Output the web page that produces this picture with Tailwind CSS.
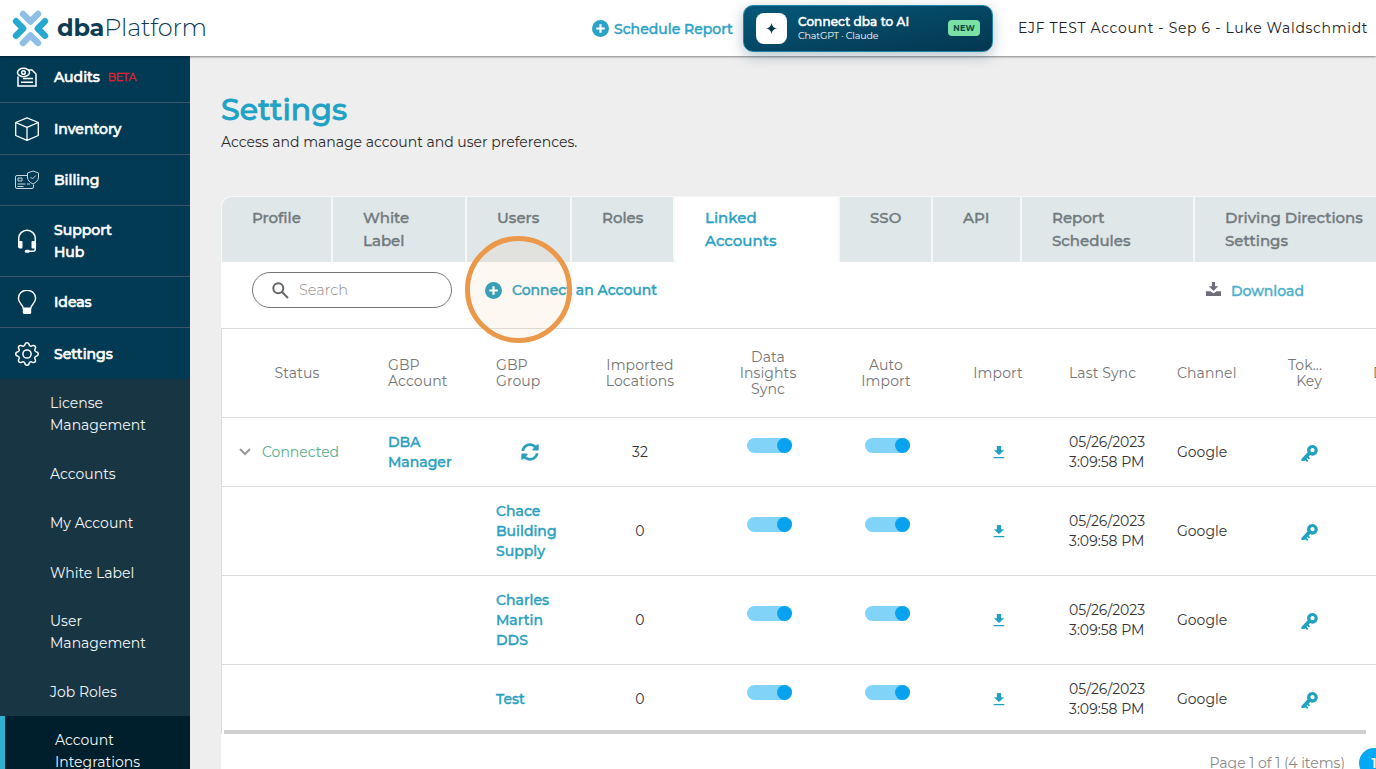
<!DOCTYPE html>
<html lang="en-us">
    <head><meta name="viewport" content="width=device-width, initial-scale=1.0">
<meta charset="UTF-8">
<script src="https://cdn.jsdelivr.net/npm/@tailwindcss/browser@4"></script>
    <title>dbaPlatform | Settings</title>
    </head>
    <body class="flex flex-col h-screen overflow-hidden bg-[#eeeeee] font-['Montserrat','Inter',sans-serif] text-sm text-[#333]">

        <!-- icons -->
        <svg class="hidden">
            <symbol id="plus" viewBox="0 0 17 17">
                <circle cx="8.5" cy="8.5" r="8.5" fill="currentColor"/>
                <path d="M8.5 4.2v8.6M4.2 8.5h8.6" stroke="#fff" stroke-width="2.2"/>
            </symbol>
            <symbol id="import" viewBox="0 0 12 14">
                <path d="M3.9 1h4.2v4.2h3L6 10 .9 5.2h3z" fill="currentColor"/>
                <path d="M.7 12.6h10.6" stroke="currentColor" stroke-width="1.3"/>
            </symbol>
            <symbol id="key" viewBox="0 0 17 17">
                <path fill-rule="evenodd" fill="currentColor" d="M11.4 0a5.3 5.3 0 1 1-2.2 10.1L7.6 11.7l1.5 1.5-1.3 1.3-1.5-1.4-.7.7 1.8 1.8-1.3 1.3-1.9-1.7-1 .7L.4 16V13.900L6.500 7.400A5.300 5.300 0 0 1 11.400 0ZM11.500 3.100a2.100 2.100 0 1 0 .01 0Z"/>
            </symbol>
        </svg>

        <header class="relative z-10 flex flex-none items-center h-14 bg-white shadow-[0_1px_2px_rgba(0,0,0,0.45)]">
            <a class="flex items-center w-[592px] pl-3" href="#">
                <svg class="w-[37px] h-[37px] mr-2" viewBox="0 0 37 37" fill="none" stroke-width="6.4" stroke-linecap="round" stroke-linejoin="round">
                    <path d="M11 4l7.500 7.500L26 4M11 33l7.500-7.500L26 33" stroke="#8fbfe6"/>
                    <path d="M4 11.200l7.200 7.300L4 25.800M33 11.200l-7.200 7.300L33 25.800" stroke="#27a9cf"/>
                </svg>
                <span class="text-[24px] leading-none font-bold tracking-[-0.2px] text-[#0c3d54]">dba<span class="font-light">Platform</span></span>
            </a>
            <a class="flex items-center w-[151px] font-medium text-[#2aa3c6]" href="#">
                <svg class="flex-none w-[17px] h-[17px] mr-[5px]"><use href="#plus"/></svg>
                <span class="pt-px whitespace-nowrap [-webkit-text-stroke:0.4px]">Schedule Report</span>
            </a>
            <a class="flex items-center w-[250px] h-[47px] pl-3 pr-3 rounded-[10px] border border-[#1f86a8] bg-linear-to-br from-[#05597a] to-[#04364f] text-white shadow-[0_4px_14px_rgba(2,58,84,0.3)]" href="#">
                <span class="flex items-center justify-center w-[31px] h-[31px] rounded-lg bg-white">
                    <svg class="w-[11px] h-[11px]" viewBox="0 0 10 10"><path d="M5 0Q5.600 4.400 10 5 5.600 5.600 5 10 4.400 5.600 0 5 4.400 4.400 5 0Z" fill="#04364f"/></svg>
                </span>
                <span class="flex flex-col ml-[11px]">
                    <span class="text-xs leading-[15px] font-medium tracking-[0.1px] whitespace-nowrap [-webkit-text-stroke:0.5px]">Connect dba to AI</span>
                    <span class="text-[9.500px] leading-[13px] tracking-[-0.15px]">ChatGPT · Claude</span>
                </span>
                <span class="ml-auto px-[5px] py-px rounded bg-[#7be0a4] text-[8px] leading-[14px] font-bold tracking-wide text-[#0b4a3c]">NEW</span>
            </a>
            <span class="ml-[25px] tracking-[0.67px] text-[#222] whitespace-nowrap">EJF TEST Account - Sep 6 - Luke Waldschmidt</span>
        </header>

        <div class="flex flex-1 min-h-0">
            <nav class="flex-none w-[190px] overflow-hidden bg-[#023a54] text-white">
                <div class="font-medium leading-[22px] [-webkit-text-stroke:0.6px]">
                    <a class="flex items-center h-[47px] pl-[15px] pb-1 border-b border-[#3a5468]" href="#">
                        <svg class="w-6 h-6 mr-[15px]" viewBox="0 0 24 24" fill="none" stroke="#fff" stroke-width="1.500">
                            <path d="M3 11.500V21h18V9l-4-4h-4"/>
                            <ellipse cx="8.500" cy="7.500" rx="6" ry="4.200"/><circle cx="8.500" cy="7.500" r="1.800"/>
                            <path d="M8 13.500h10M6 17.300h12"/>
                        </svg>
                        Audits <span class="ml-2 text-[11px] font-normal tracking-[-0.3px] text-[#e0202c] [-webkit-text-stroke:0.4px]">BETA</span>
                    </a>
                    <a class="flex items-center h-[52px] pl-[15px] border-b border-[#3a5468]" href="#">
                        <svg class="w-6 h-6 mr-[15px]" viewBox="0 0 24 24" fill="none" stroke="#fff" stroke-width="1.300" stroke-linejoin="round"><path d="M12 .800l11.300 4.700v13L12 23.300.700 18.500v-13zM.700 5.500L12 10.300l11.300-4.800M12 10.300v13"/></svg>
                        Inventory
                    </a>
                    <a class="flex items-center h-[51px] pl-[15px] border-b border-[#3a5468]" href="#">
                        <svg class="w-6 h-6 mr-[15px]" viewBox="0 0 24 24" fill="none" stroke="#c9d8e0" stroke-width="1">
                            <path d="M12 7.500H2A1.500 1.500 0 0 0 .500 9v10A1.500 1.500 0 0 0 2 20.500h15a1.500 1.500 0 0 0 1.500-1.500v-2.500M18 3l5.500 2v4c0 3.500-2.500 5.500-5.500 7-3-1.500-5.500-3.500-5.500-7V5z"/>
                            <path d="M15.500 9l2 2 3.300-3.500M3 10h4v3H3zM2.500 16h8m1.500 0h3M2.500 18.500h6"/>
                        </svg>
                        Billing
                    </a>
                    <a class="flex items-center h-[71px] pl-[15px] border-b border-[#3a5468]" href="#">
                        <svg class="w-6 h-6 mr-[15px]" viewBox="0 0 24 24" fill="none" stroke="#fff" stroke-width="1.500">
                            <path d="M3.700 13V9.500a8.300 8.300 0 0 1 16.600 0V20q0 2.300-2.500 2.300H14"/>
                            <path d="M3 12h3.500a1 1 0 0 1 1 1v5.500a1 1 0 0 1-1 1H5a2 2 0 0 1-2-2zM21 12h-3.500a1 1 0 0 0-1 1v5.500a1 1 0 0 0 1 1H21z" fill="#fff" stroke="none"/>
                            <rect x="9.800" y="20.800" width="5" height="3" rx="1.500" fill="#fff" stroke="none"/>
                        </svg>
                        <span class="w-20">Support Hub</span>
                    </a>
                    <a class="flex items-center h-[51px] pl-[15px] border-b border-[#3a5468]" href="#">
                        <svg class="w-6 h-6 mr-[15px]" viewBox="0 0 24 24" fill="none" stroke="#fff" stroke-width="1.400">
                            <path d="M8.300 18.300c0-3.300-4.900-4.800-4.900-10a8.600 8.100 0 0 1 17.200 0c0 5.200-4.900 6.700-4.900 10z"/>
                            <path d="M7.800 18h8.400v4.500a1.500 1.500 0 0 1-1.500 1.500H9.300a1.500 1.500 0 0 1-1.500-1.500z" fill="#fff" stroke="none"/>
                        </svg>
                        Ideas
                    </a>
                    <a class="flex items-center h-[51px] pl-[15px]" href="#">
                        <svg class="w-6 h-6 mr-[15px]" viewBox="0 0 16 16" fill="#fff">
                            <path d="M8 4.754a3.246 3.246 0 1 0 0 6.492 3.246 3.246 0 0 0 0-6.492zM5.754 8a2.246 2.246 0 1 1 4.492 0 2.246 2.246 0 0 1-4.492 0z"/>
                            <path d="M9.796 1.343c-.527-1.790-3.065-1.790-3.592 0l-.094.319a.873.873 0 0 1-1.255.520l-.292-.160c-1.640-.892-3.433.902-2.540 2.541l.159.292a.873.873 0 0 1-.520 1.255l-.319.094c-1.790.527-1.790 3.065 0 3.592l.319.094a.873.873 0 0 1 .520 1.255l-.160.292c-.892 1.640.901 3.434 2.541 2.540l.292-.159a.873.873 0 0 1 1.255.520l.094.319c.527 1.790 3.065 1.790 3.592 0l.094-.319a.873.873 0 0 1 1.255-.520l.292.160c1.640.893 3.434-.902 2.540-2.541l-.159-.292a.873.873 0 0 1 .520-1.255l.319-.094c1.790-.527 1.790-3.065 0-3.592l-.319-.094a.873.873 0 0 1-.520-1.255l.160-.292c.893-1.640-.902-3.433-2.541-2.540l-.292.159a.873.873 0 0 1-1.255-.520l-.094-.319zm-2.633.283c.246-.835 1.428-.835 1.674 0l.094.319a1.873 1.873 0 0 0 2.693 1.115l.291-.160c.764-.415 1.600.420 1.184 1.185l-.159.292a1.873 1.873 0 0 0 1.116 2.692l.318.094c.835.246.835 1.428 0 1.674l-.319.094a1.873 1.873 0 0 0-1.115 2.693l.160.291c.415.764-.420 1.600-1.185 1.184l-.291-.159a1.873 1.873 0 0 0-2.693 1.116l-.094.318c-.246.835-1.428.835-1.674 0l-.094-.319a1.873 1.873 0 0 0-2.692-1.115l-.292.160c-.764.415-1.600-.420-1.184-1.185l.159-.291A1.873 1.873 0 0 0 1.945 8.930l-.319-.094c-.835-.246-.835-1.428 0-1.674l.319-.094A1.873 1.873 0 0 0 3.060 4.377l-.160-.292c-.415-.764.420-1.600 1.185-1.184l.292.159a1.873 1.873 0 0 0 2.692-1.115l.094-.319z"/>
                        </svg>
                        Settings
                    </a>
                </div>
                <div class="bg-[#183544] leading-[22px] text-[#f4f7f8]">
                    <a class="flex items-center h-[71px] pl-[50px] pr-8 pb-0.5" href="#">License Management</a>
                    <a class="flex items-center h-[49px] pl-[50px] pb-0.5" href="#">Accounts</a>
                    <a class="flex items-center h-[49px] pl-[50px] pb-0.5" href="#">My Account</a>
                    <a class="flex items-center h-[49px] pl-[50px]" href="#">White Label</a>
                    <a class="flex items-center h-[71px] pl-[50px] pr-8 pb-0.5" href="#">User Management</a>
                    <a class="flex items-center h-12 pl-[50px]" href="#">Job Roles</a>
                    <a class="flex items-center h-[71px] pl-[50px] pr-8 pb-0.5 border-l-5 border-[#2eb1d1] bg-[#001f2c]" href="#">Account Integrations</a>
                </div>
            </nav>

            <main class="flex flex-col flex-1 min-w-0 pl-[31px] overflow-hidden">
                <h1 class="mt-[34px] text-[30px] leading-10 font-medium text-[#20a1c6] [-webkit-text-stroke:0.8px]">Settings</h1>
                <p class="mt-0.5 leading-5 text-[#2b2b2b]">Access and manage account and user preferences.</p>

                <div class="flex flex-none w-[1300px] h-[66px] mt-11 gap-0.5 pl-px pt-px rounded-tl-[10px] bg-[#f6f8f8] text-[15px] leading-[23px] font-medium text-[#717a7e] [-webkit-text-stroke:0.4px] *:flex-none *:bg-[#e0e7e9] *:px-[30px] *:pt-[9px]">
                    <a class="w-[109px] rounded-tl-[10px]" href="#">Profile</a>
                    <a class="w-[132px]" href="#">White<br>Label</a>
                    <a class="w-[103px]" href="#">Users</a>
                    <a class="w-[101px]" href="#">Roles</a>
                    <a class="w-[163px] bg-white! text-[#2ba2c3]" href="#">Linked<br>Accounts</a>
                    <a class="w-[91px]" href="#">SSO</a>
                    <a class="w-[87px]" href="#">API</a>
                    <a class="w-[171px]" href="#">Report<br>Schedules</a>
                    <a class="w-[250px]" href="#">Driving Directions<br>Settings</a>
                </div>

                <div class="relative flex flex-none items-center h-[66px] pb-2.5 pl-[31px] bg-white">
                    <div class="flex items-center w-[200px] h-9 pl-[19px] rounded-full border border-[#777] text-[14.500px] font-light text-[#8b8b8b]">
                        <svg class="w-[17px] h-[17px] mr-2.5" viewBox="0 0 17 17" fill="none" stroke="#666" stroke-width="2"><circle cx="6.300" cy="6.300" r="5"/><path d="M10 10l6 6"/></svg>
                        Search
                    </div>
                    <a class="flex items-center ml-[33px] font-medium text-[#2aa0c1] [-webkit-text-stroke:0.4px]" href="#">
                        <svg class="w-[17px] h-[17px] mr-2.5"><use href="#plus"/></svg>
                        Connect an Account
                    </a>
                    <a class="flex items-center ml-auto mr-[72px] pt-0.5 font-medium text-[#4bb0cd] [-webkit-text-stroke:0.4px]" href="#">
                        <svg class="w-[15px] h-[14px] mr-2.5 mb-1" viewBox="0 0 15 14" fill="#6d6e7a">
                            <path d="M5.900 0h3.200v4.300h3.100L7.500 9 2.800 4.300h3.100z"/>
                            <path d="M0 9.300h4.300l3.200 2 3.200-2H15V14H0z"/>
                        </svg>
                        Download
                    </a>
                    <!-- click marker -->
                    <div class="absolute z-10 left-[244px] top-[-26px] w-[107px] h-[107px] rounded-full border-5 border-[#eb984b] bg-[#eb984b]/7"></div>
                </div>

                <div class="flex-none border-l border-t border-[#dcdcdc] bg-white">
                    <table class="table-fixed w-[1240px] leading-5 [&_td]:p-0">
                        <colgroup>
                            <col class="w-[150px]"><col class="w-[108px]"><col class="w-[104px]"><col class="w-[112px]"><col class="w-[144px]"><col class="w-[92px]"><col class="w-[132px]"><col class="w-[97px]"><col class="w-[110px]"><col class="w-[86px]"><col class="w-[105px]">
                        </colgroup>
                        <thead class="leading-4 tracking-[0.1px] text-[#757575] [&_th]:pt-px [&_th]:font-normal">
                            <tr class="h-[88px] border-b border-[#dcdcdc]">
                                <th>Status</th>
                                <th class="pl-4 text-left">GBP<br>Account</th>
                                <th class="pl-4 text-left">GBP<br>Group</th>
                                <th>Imported<br>Locations</th>
                                <th>Data<br>Insights<br>Sync</th>
                                <th>Auto<br>Import</th>
                                <th>Import</th>
                                <th class="pl-[5px] text-left">Last Sync</th>
                                <th class="pl-4 text-left">Channel</th>
                                <th class="pr-[35px] text-right">Tok...<br>Key</th>
                                <th class="pl-4 text-left">Delete</th>
                            </tr>
                        </thead>
                        <tbody class="[&_tr]:border-b [&_tr]:border-[#dcdcdc]">
                            <tr class="h-[69px]">
                                <td>
                                    <div class="flex items-center pl-[17px] text-[#57ad86]">
                                        <svg class="w-3 h-2 mr-[11px]" viewBox="0 0 12 8" fill="none" stroke="#999" stroke-width="2"><path d="M1 1l5 5 5-5"/></svg>
                                        Connected
                                    </div>
                                </td>
                                <td><div class="pl-4 font-medium text-[#2a9fc0] [-webkit-text-stroke:0.4px]">DBA<br>Manager</div></td>
                                <td>
                                    <svg class="w-[18px] h-[18px] ml-[41px]" viewBox="0 0 512 512" fill="#2a9fc0"><path d="M370.720 133.280C339.458 104.008 298.888 87.962 255.848 88c-77.458.068-144.328 53.178-162.791 126.850-1.344 5.363-6.122 9.150-11.651 9.150H24.103c-7.498 0-13.194-6.807-11.807-14.176C33.933 94.924 134.813 8 256 8c66.448 0 126.791 26.136 171.315 68.685L463.030 40.970C478.149 25.851 504 36.559 504 57.941V192c0 13.255-10.745 24-24 24H345.941c-21.382 0-32.090-25.851-16.971-40.971l41.750-41.749zM32 296h134.059c21.382 0 32.090 25.851 16.971 40.971l-41.750 41.750c31.262 29.273 71.835 45.319 114.876 45.280 77.418-.070 144.315-53.144 162.787-126.849 1.344-5.363 6.122-9.150 11.651-9.150h57.304c7.498 0 13.194 6.807 11.807 14.176C478.067 417.076 377.187 504 256 504c-66.448 0-126.791-26.136-171.315-68.685L48.970 471.030C33.851 486.149 8 475.441 8 454.059V320c0-13.255 10.745-24 24-24z"/></svg>
                                </td>
                                <td class="text-center">32</td>
                                <td><div class="flex justify-end w-[45px] h-[15px] ml-[51px] mb-[13px] rounded-full bg-[#81d3f8]"><span class="w-[15px] rounded-full bg-[#08a2ee]"></span></div></td>
                                <td><div class="flex justify-end w-[45px] h-[15px] ml-[25px] mb-[13px] rounded-full bg-[#81d3f8]"><span class="w-[15px] rounded-full bg-[#08a2ee]"></span></div></td>
                                <td><svg class="w-3 h-3.5 ml-[61px] text-[#22a0c2]"><use href="#import"/></svg></td>
                                <td><div class="pl-[5px]">05/26/2023<br>3:09:58 PM</div></td>
                                <td><div class="pl-4">Google</div></td>
                                <td><svg class="w-[17px] h-[17px] ml-[30px] mt-[3px] text-[#22a0c2]"><use href="#key"/></svg></td>
                                <td></td>
                            </tr>
                            <tr class="h-[89px]">
                                <td></td>
                                <td></td>
                                <td><div class="pl-4 font-medium text-[#2a9fc0] [-webkit-text-stroke:0.4px]">Chace<br>Building<br>Supply</div></td>
                                <td class="text-center">0</td>
                                <td><div class="flex justify-end w-[45px] h-[15px] ml-[51px] mb-[13px] rounded-full bg-[#81d3f8]"><span class="w-[15px] rounded-full bg-[#08a2ee]"></span></div></td>
                                <td><div class="flex justify-end w-[45px] h-[15px] ml-[25px] mb-[13px] rounded-full bg-[#81d3f8]"><span class="w-[15px] rounded-full bg-[#08a2ee]"></span></div></td>
                                <td><svg class="w-3 h-3.5 ml-[61px] text-[#22a0c2]"><use href="#import"/></svg></td>
                                <td><div class="pl-[5px]">05/26/2023<br>3:09:58 PM</div></td>
                                <td><div class="pl-4">Google</div></td>
                                <td><svg class="w-[17px] h-[17px] ml-[30px] mt-[3px] text-[#22a0c2]"><use href="#key"/></svg></td>
                                <td></td>
                            </tr>
                            <tr class="h-[89px]">
                                <td></td>
                                <td></td>
                                <td><div class="pl-4 font-medium text-[#2a9fc0] [-webkit-text-stroke:0.4px]">Charles<br>Martin<br>DDS</div></td>
                                <td class="text-center">0</td>
                                <td><div class="flex justify-end w-[45px] h-[15px] ml-[51px] mb-[13px] rounded-full bg-[#81d3f8]"><span class="w-[15px] rounded-full bg-[#08a2ee]"></span></div></td>
                                <td><div class="flex justify-end w-[45px] h-[15px] ml-[25px] mb-[13px] rounded-full bg-[#81d3f8]"><span class="w-[15px] rounded-full bg-[#08a2ee]"></span></div></td>
                                <td><svg class="w-3 h-3.5 ml-[61px] text-[#22a0c2]"><use href="#import"/></svg></td>
                                <td><div class="pl-[5px]">05/26/2023<br>3:09:58 PM</div></td>
                                <td><div class="pl-4">Google</div></td>
                                <td><svg class="w-[17px] h-[17px] ml-[30px] mt-[3px] text-[#22a0c2]"><use href="#key"/></svg></td>
                                <td></td>
                            </tr>
                            <tr class="h-[70px]">
                                <td></td>
                                <td></td>
                                <td><div class="pl-4 font-medium text-[#2a9fc0] [-webkit-text-stroke:0.4px]">Test</div></td>
                                <td class="text-center">0</td>
                                <td><div class="flex justify-end w-[45px] h-[15px] ml-[51px] mb-[13px] rounded-full bg-[#81d3f8]"><span class="w-[15px] rounded-full bg-[#08a2ee]"></span></div></td>
                                <td><div class="flex justify-end w-[45px] h-[15px] ml-[25px] mb-[13px] rounded-full bg-[#81d3f8]"><span class="w-[15px] rounded-full bg-[#08a2ee]"></span></div></td>
                                <td><svg class="w-3 h-3.5 ml-[61px] text-[#22a0c2]"><use href="#import"/></svg></td>
                                <td><div class="pl-[5px]">05/26/2023<br>3:09:58 PM</div></td>
                                <td><div class="pl-4">Google</div></td>
                                <td><svg class="w-[17px] h-[17px] ml-[30px] mt-[3px] text-[#22a0c2]"><use href="#key"/></svg></td>
                                <td></td>
                            </tr>
                        </tbody>
                    </table>
                    <!-- scrollbar -->
                    <div class="relative -mt-[5px] ml-0.5 w-[1142px] h-1 bg-[#d0d0d0]"></div>
                </div>

                <div class="flex flex-none justify-end items-start h-20 pt-3.5 bg-white text-[#8a8a8a]">
                    <span class="mt-[5px] mr-3.5">Page 1 of 1 (4 items)</span>
                    <span class="flex-none flex items-center justify-center w-[30px] h-[30px] -mr-[13px] rounded-full bg-[#03a9f4] font-semibold text-white">1</span>
                </div>
            </main>
        </div>
    </body>
</html>
